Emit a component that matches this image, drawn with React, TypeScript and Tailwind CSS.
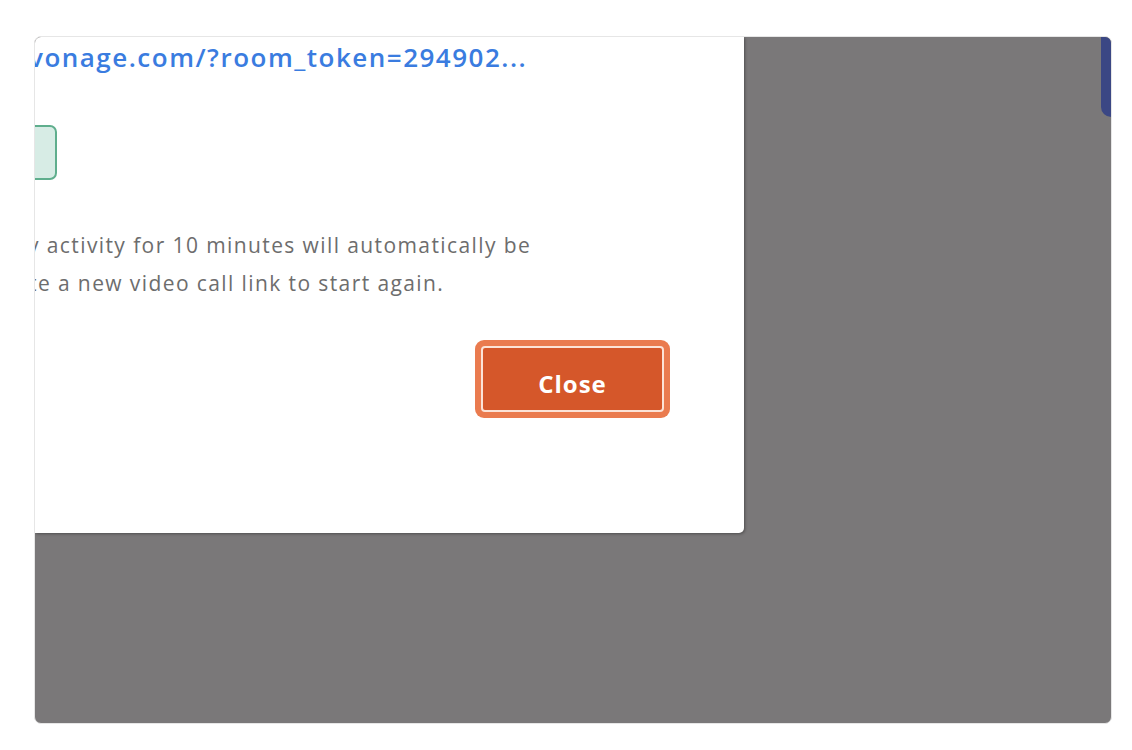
import React from "react";

const font = { fontFamily: '"Open Sans", "Liberation Sans", sans-serif' };

const App = () => {
  return (
    <div className="min-h-[750px] w-full bg-white pt-[36px] pl-[34px]" style={font}>
      {/* screen frame */}
      <div className="flex h-[688px] w-[1078px] overflow-hidden rounded-[7px] border border-[#e6e6e6] bg-[#7a7879]">
        {/* dialog, cut off at the left and top */}
        <div className="flex h-[496px] w-[709px] shrink-0 flex-col overflow-hidden rounded-br-[5px] bg-white shadow-[1px_1px_3px_rgba(0,0,0,0.35)]">
          <p className="-ml-[6px] mt-[2px] whitespace-nowrap text-[26px] font-semibold leading-[36px] tracking-[1.5px] text-[#3a7ce0]">
            vonage.com/?room_token=294902...
          </p>

          <div className="-ml-[10px] mt-[50px] h-[55px] w-[32px] rounded-[7px] border-2 border-[#5fae8d] bg-[#d7ece5]" />

          <div className="mt-[46px] text-[21px] leading-[38px] tracking-[1.4px] text-[#6d6d6d]">
            <p className="-ml-[7px] whitespace-nowrap">y activity for 10 minutes will automatically be</p>
            <p className="-ml-[6px] whitespace-nowrap">te a new video call link to start again.</p>
          </div>

          <div className="mt-[38px] flex justify-end pr-[74px]">
            <div className="rounded-[9px] bg-[#ea7b4f] p-[6px]">
              <button className="flex h-[66px] w-[183px] items-center justify-center rounded-[4px] border-2 border-[#fce3d7] bg-[#d5572a] pt-[10px] text-[24px] font-bold tracking-[1px] text-white">
                Close
              </button>
            </div>
          </div>
        </div>

        <div className="flex-1" />

        {/* side panel edge */}
        <div className="h-[80px] w-[10px] shrink-0 rounded-bl-[12px] bg-[#3b4784]" />
      </div>
    </div>
  );
};

export default App;
